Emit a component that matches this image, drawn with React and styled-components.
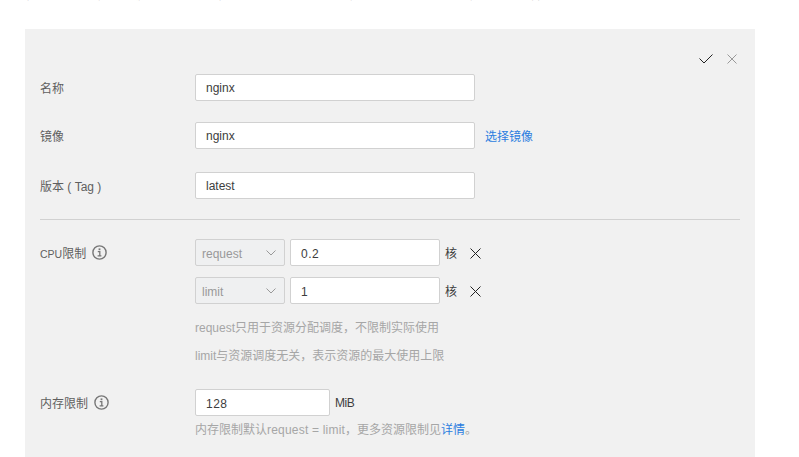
import React from "react";
import styled, { createGlobalStyle } from "styled-components";

const FONT = `"Liberation Sans", "Noto Sans CJK SC", sans-serif`;

const Global = createGlobalStyle`
  html, body { margin: 0; padding: 0; background: #fff; }
  body { width: 799px; height: 457px; overflow: hidden; font-family: ${FONT}; font-size: 12px; color: #444; }
`;

const Page = styled.div`
  width: 799px;
  height: 457px;
  overflow: hidden;
  padding: 0 44px 0 25px;
  box-sizing: border-box;
  display: flex;
  flex-direction: column;
`;

const Intro = styled.p`
  margin: -12px 0 0;
  height: 41px;
  line-height: 14px;
  color: #888;
  white-space: nowrap;
  flex: none;
`;

const Link = styled.a`
  color: #2b7de0;
  cursor: pointer;
`;

const SideLink = styled(Link)`
  margin-left: 5px;
`;

const Panel = styled.div`
  background: #f1f1f1;
  width: 730px;
  flex: 1;
  padding: 21px 15px 0;
  box-sizing: border-box;
`;

const Actions = styled.div`
  display: flex;
  justify-content: flex-end;
  align-items: center;
  gap: 14px;
  height: 18px;
  margin-bottom: 6px;
  padding-right: 3px;
`;

const Row = styled.div`
  display: flex;
  align-items: ${(p) => (p.$top ? "flex-start" : "center")};
  margin-top: ${(p) => p.$mt ?? 0}px;
  margin-bottom: ${(p) => p.$mb ?? 0}px;
`;

const Label = styled.div`
  width: 155px;
  flex: none;
  display: flex;
  align-items: center;
  gap: 6px;
  color: #5f5f5f;
  height: 26px;
`;

const Narrow = styled.span`
  font-size: 10.5px;
`;

const Field = styled.div`
  display: flex;
  align-items: center;
  gap: 5px;
`;

const TextInput = styled.div`
  box-sizing: border-box;
  width: ${(p) => p.$w}px;
  height: 27px;
  padding: ${(p) => (p.$num ? "2px" : "0")} 10px 0;
  background: #fff;
  border: 1px solid #d1d1d1;
  border-radius: 2px;
  display: flex;
  align-items: center;
  color: #3d3d3d;
  letter-spacing: ${(p) => (p.$num ? "0.5px" : "0")};
`;

const Unit = styled.span`
  color: #3d3d3d;
  letter-spacing: -0.5px;
`;

const Divider = styled.hr`
  border: 0;
  height: 1px;
  background: #d1d1d1;
  margin: 0 0 19px;
`;

const Stack = styled.div`
  display: flex;
  flex-direction: column;
  gap: 11px;
`;

const SelectBox = styled.div`
  box-sizing: border-box;
  width: 90px;
  height: 27px;
  padding: 0 8px 0 6px;
  background: #eff0f1;
  border: 1px solid #d1d1d1;
  border-radius: 2px;
  display: flex;
  align-items: center;
  justify-content: space-between;
  color: #999;
`;

const SelectText = styled.span`
  padding-top: 2px;
`;

const Hint = styled.div`
  color: #a6a6a6;
  line-height: 14px;
  margin-top: ${(p) => p.$mt ?? 0}px;
`;

const Latin = styled.span`
  letter-spacing: 0.2px;
`;

const Svg = styled.svg`
  display: block;
  flex: none;
  margin-left: ${(p) => p.$ml ?? 0}px;
  margin-top: ${(p) => p.$mt ?? 0}px;
`;

const Check = () => (
  <Svg width="14" height="10" viewBox="0 0 14 10" fill="none" stroke="#222" strokeWidth="1">
    <path d="M0.5 4.5 L5 9 L13.5 0.5" />
  </Svg>
);

const Cross = ({ color = "#222", ml, mt, size = 11 }) => (
  <Svg $ml={ml} $mt={mt} width={size} height={size} viewBox={`0 0 ${size} ${size}`} fill="none" stroke={color} strokeWidth="1">
    <path d={`M0.5 0.5 L${size - 0.5} ${size - 0.5} M${size - 0.5} 0.5 L0.5 ${size - 0.5}`} />
  </Svg>
);

const Chevron = () => (
  <Svg width="10" height="6" viewBox="0 0 10 6" fill="none" stroke="#999" strokeWidth="1">
    <path d="M0.5 0.5 L5 5 L9.5 0.5" />
  </Svg>
);

const Info = () => (
  <Svg width="15" height="15" viewBox="0 0 15 15" fill="none">
    <circle cx="7.5" cy="7.5" r="6.6" stroke="#777" strokeWidth="1.4" />
    <rect x="6.6" y="3.4" width="1.8" height="1.8" fill="#777" />
    <path d="M5.8 6.7h2v3.9M5.6 10.9h3.8" stroke="#777" strokeWidth="1.3" />
  </Svg>
);

export default function App() {
  return (
    <>
      <Global />
      <Page>
        <Intro>
          容器配置说明，请根据实际需要填写容器的名称、镜像和版本，并按需设置资源限制，详情请查看<Link>帮助页</Link>
        </Intro>
        <Panel>
          <Actions>
            <Check />
            <Cross color="#999" size={10} />
          </Actions>
          <Row $mb={21}>
            <Label>名称</Label>
            <TextInput $w={280}>nginx</TextInput>
          </Row>
          <Row $mb={23}>
            <Label>镜像</Label>
            <Field>
              <TextInput $w={280}>nginx</TextInput>
              <SideLink>选择镜像</SideLink>
            </Field>
          </Row>
          <Row $mb={20}>
            <Label>版本 ( Tag )</Label>
            <TextInput $w={280}>latest</TextInput>
          </Row>
          <Divider />
          <Row $top>
            <Label><span><Narrow>CPU</Narrow>限制</span><Info /></Label>
            <div>
              <Stack>
                <Field>
                  <SelectBox><SelectText>request</SelectText><Chevron /></SelectBox>
                  <TextInput $w={150} $num>0.2</TextInput>
                  <Unit>核</Unit>
                  <Cross ml={8} mt={2} />
                </Field>
                <Field>
                  <SelectBox><SelectText>limit</SelectText><Chevron /></SelectBox>
                  <TextInput $w={150} $num>1</TextInput>
                  <Unit>核</Unit>
                  <Cross ml={8} mt={2} />
                </Field>
              </Stack>
              <Hint $mt={17}>request只用于资源分配调度，不限制实际使用</Hint>
              <Hint $mt={14}>limit与资源调度无关，表示资源的最大使用上限</Hint>
            </div>
          </Row>
          <Row $top $mt={26}>
            <Label>内存限制<Info /></Label>
            <div>
              <Field>
                <TextInput $w={135} $num>128</TextInput>
                <Unit>MiB</Unit>
              </Field>
              <Hint $mt={7}>内存限制默认<Latin>request = limit</Latin>，更多资源限制见<Link>详情</Link>。</Hint>
            </div>
          </Row>
        </Panel>
      </Page>
    </>
  );
}
